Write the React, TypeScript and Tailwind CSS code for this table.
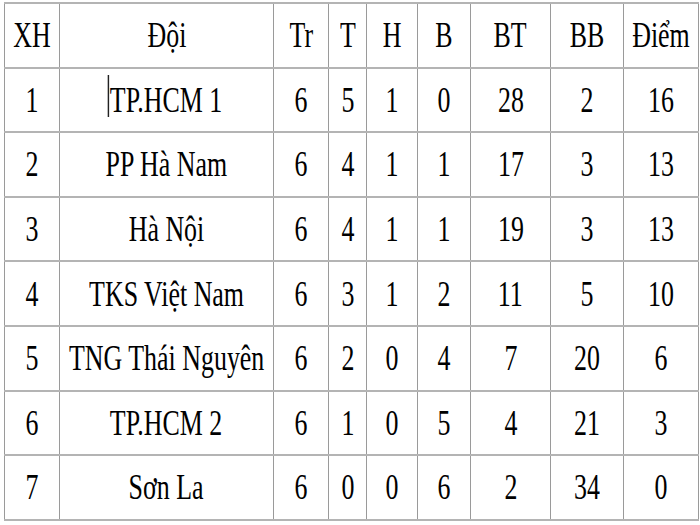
const columns = ["XH", "Đội", "Tr", "T", "H", "B", "BT", "BB", "Điểm"];

const rows = [
  ["1", "TP.HCM 1", "6", "5", "1", "0", "28", "2", "16"],
  ["2", "PP Hà Nam", "6", "4", "1", "1", "17", "3", "13"],
  ["3", "Hà Nội", "6", "4", "1", "1", "19", "3", "13"],
  ["4", "TKS Việt Nam", "6", "3", "1", "2", "11", "5", "10"],
  ["5", "TNG Thái Nguyên", "6", "2", "0", "4", "7", "20", "6"],
  ["6", "TP.HCM 2", "6", "1", "0", "5", "4", "21", "3"],
  ["7", "Sơn La", "6", "0", "0", "6", "2", "34", "0"],
];

function Cell({ text, caret }: { text: string; caret?: boolean }) {
  return (
    <td className="h-[64.6px] border-x border-x-[#9a9a9a] border-y-2 border-y-[#b4b4b4] p-0">
      <div className="flex justify-center items-center">
        <span className="relative inline-block whitespace-nowrap scale-x-[0.72] text-[36px] leading-none text-black font-['Liberation_Serif']">
          {caret && (
            <span className="absolute left-[-3px] top-[-7px] w-[2px] h-[42px] bg-[#222]" />
          )}
          {text}
        </span>
      </div>
    </td>
  );
}

export default function App() {
  return (
    <div className="w-[700px] h-[525px] bg-white overflow-hidden pt-[2px] pl-[4px] font-serif">
      <table className="table-fixed border-collapse w-[694px]">
        <colgroup>
          <col className="w-[55px]" />
          <col className="w-[214px]" />
          <col className="w-[55px]" />
          <col className="w-[38px]" />
          <col className="w-[51px]" />
          <col className="w-[53px]" />
          <col className="w-[80px]" />
          <col className="w-[73px]" />
          <col className="w-[75px]" />
        </colgroup>
        <tbody>
          <tr>
            {columns.map((c) => (
              <Cell key={c} text={c} />
            ))}
          </tr>
          {rows.map((r) => (
            <tr key={r[0]}>
              {r.map((v, i) => (
                <Cell key={i} text={v} caret={r[0] === "1" && i === 1} />
              ))}
            </tr>
          ))}
        </tbody>
      </table>
    </div>
  );
}
